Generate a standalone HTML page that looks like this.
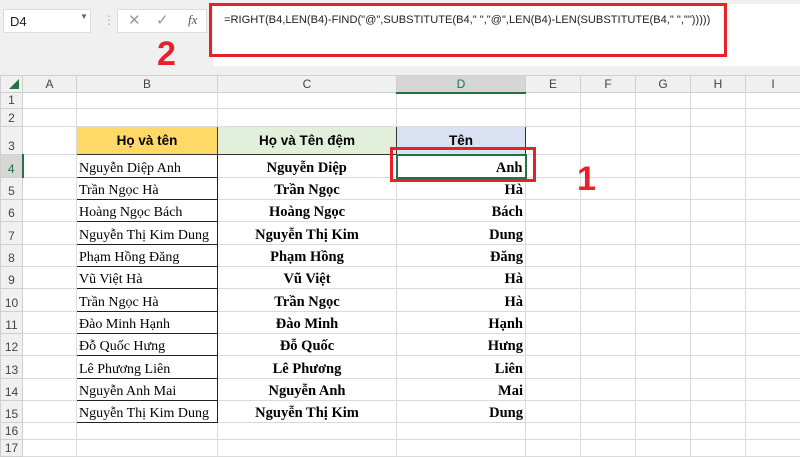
<!DOCTYPE html>
<html><head><meta charset="utf-8"><style>
*{margin:0;padding:0;box-sizing:border-box}
body{width:800px;height:450px;overflow:hidden;background:#fff;position:relative;font-family:"Liberation Sans",sans-serif}
.top{position:absolute;left:0;top:0;width:800px;height:75px;background:#f0f0f0}
.box{position:absolute;background:#fff;border:1px solid #dcdcdc}
.red{position:absolute;border:3px solid #e8202a}
.num{position:absolute;color:#e8202a;font-weight:bold;font-size:34px;line-height:1}
table{position:absolute;left:0;top:75px;border-collapse:collapse;table-layout:fixed;width:800px}
td{border:1px solid #dadada;font-size:13px;overflow:hidden;white-space:nowrap;padding:0 2px;vertical-align:bottom}
tr.h td{background:#f0f0f0;color:#444;text-align:center;vertical-align:middle;font-size:12px;height:17px;border-color:#cfcfcf}
td.rh{background:#f0f0f0;color:#444;text-align:center;font-size:12px;border-color:#cfcfcf;padding-bottom:1px}
.b{font-family:"Liberation Serif",serif;font-size:14px;border:1px solid #222}
.c{font-family:"Liberation Serif",serif;font-size:14.5px;font-weight:bold;text-align:center}
.d{font-family:"Liberation Serif",serif;font-size:14.5px;font-weight:bold;text-align:right}
.hd{font-weight:bold;font-size:13.5px;text-align:center;border:1px solid #333;vertical-align:middle}
</style></head><body>
<div class="top"></div>
<div class="box" style="left:3px;top:9px;width:88px;height:24px;font-size:13px;padding:4px 6px;color:#222">D4<span style="position:absolute;left:76px;top:2px;font-size:8px;color:#666">▼</span></div>
<div style="position:absolute;left:103px;top:13px;color:#aaa;font-size:12px">⋮</div>
<div class="box" style="left:117px;top:9px;width:90px;height:24px;font-size:15px;color:#999"><span style="position:absolute;left:10px;top:1px">✕</span><span style="position:absolute;left:38px;top:1px">✓</span><span style="position:absolute;left:70px;top:2px;font-family:'Liberation Serif',serif;font-style:italic;font-size:13px;color:#555">fx</span></div>
<div class="box" style="left:213px;top:4px;width:587px;height:62px;border:none"></div>
<div style="position:absolute;left:224px;top:14px;font-size:11.1px;color:#222;white-space:nowrap">=RIGHT(B4,LEN(B4)-FIND("@",SUBSTITUTE(B4," ","@",LEN(B4)-LEN(SUBSTITUTE(B4," ","")))))</div>
<div class="red" style="left:209px;top:3px;width:518px;height:54px"></div>
<div class="num" style="left:157px;top:37px">2</div>
<table>
<colgroup><col style="width:22px"><col style="width:54px"><col style="width:141px"><col style="width:179px"><col style="width:129px"><col style="width:55px"><col style="width:55px"><col style="width:55px"><col style="width:55px"><col style="width:55px"></colgroup>
<tr class="h"><td style="position:relative"><span style="position:absolute;right:3px;bottom:3px;width:0;height:0;border-left:10px solid transparent;border-bottom:10px solid #217346"></span></td><td>A</td><td>B</td><td>C</td><td style="background:#d6d6d6;border-bottom:2px solid #217346;color:#217346">D</td><td>E</td><td>F</td><td>G</td><td>H</td><td>I</td></tr>
<tr style="height:16px"><td class="rh">1</td><td></td><td></td><td></td><td></td><td></td><td></td><td></td><td></td><td></td></tr>
<tr style="height:18px"><td class="rh">2</td><td></td><td></td><td></td><td></td><td></td><td></td><td></td><td></td><td></td></tr>
<tr style="height:28px"><td class="rh">3</td><td></td><td class="hd" style="background:#ffd966">Họ và tên</td><td class="hd" style="background:#e2efda">Họ và Tên đệm</td><td class="hd" style="background:#d9e1f2">Tên</td><td></td><td></td><td></td><td></td><td></td></tr>
<tr style="height:23px"><td class="rh" style="background:#d6d6d6;border-right:2px solid #217346;color:#217346">4</td><td></td><td class="b">Nguyễn Diệp Anh</td><td class="c">Nguyễn Diệp</td><td class="d" style="border:2px solid #217346">Anh</td><td></td><td></td><td></td><td></td><td></td></tr>
<tr style="height:22px"><td class="rh">5</td><td></td><td class="b">Trần Ngọc Hà</td><td class="c">Trần Ngọc</td><td class="d">Hà</td><td></td><td></td><td></td><td></td><td></td></tr>
<tr style="height:22px"><td class="rh">6</td><td></td><td class="b">Hoàng Ngọc Bách</td><td class="c">Hoàng Ngọc</td><td class="d">Bách</td><td></td><td></td><td></td><td></td><td></td></tr>
<tr style="height:23px"><td class="rh">7</td><td></td><td class="b">Nguyễn Thị Kim Dung</td><td class="c">Nguyễn Thị Kim</td><td class="d">Dung</td><td></td><td></td><td></td><td></td><td></td></tr>
<tr style="height:22px"><td class="rh">8</td><td></td><td class="b">Phạm Hồng Đăng</td><td class="c">Phạm Hồng</td><td class="d">Đăng</td><td></td><td></td><td></td><td></td><td></td></tr>
<tr style="height:22px"><td class="rh">9</td><td></td><td class="b">Vũ Việt Hà</td><td class="c">Vũ Việt</td><td class="d">Hà</td><td></td><td></td><td></td><td></td><td></td></tr>
<tr style="height:23px"><td class="rh">10</td><td></td><td class="b">Trần Ngọc Hà</td><td class="c">Trần Ngọc</td><td class="d">Hà</td><td></td><td></td><td></td><td></td><td></td></tr>
<tr style="height:22px"><td class="rh">11</td><td></td><td class="b">Đào Minh Hạnh</td><td class="c">Đào Minh</td><td class="d">Hạnh</td><td></td><td></td><td></td><td></td><td></td></tr>
<tr style="height:22px"><td class="rh">12</td><td></td><td class="b">Đỗ Quốc Hưng</td><td class="c">Đỗ Quốc</td><td class="d">Hưng</td><td></td><td></td><td></td><td></td><td></td></tr>
<tr style="height:23px"><td class="rh">13</td><td></td><td class="b">Lê Phương Liên</td><td class="c">Lê Phương</td><td class="d">Liên</td><td></td><td></td><td></td><td></td><td></td></tr>
<tr style="height:22px"><td class="rh">14</td><td></td><td class="b">Nguyễn Anh Mai</td><td class="c">Nguyễn Anh</td><td class="d">Mai</td><td></td><td></td><td></td><td></td><td></td></tr>
<tr style="height:22px"><td class="rh">15</td><td></td><td class="b">Nguyễn Thị Kim Dung</td><td class="c">Nguyễn Thị Kim</td><td class="d">Dung</td><td></td><td></td><td></td><td></td><td></td></tr>
<tr style="height:17px"><td class="rh">16</td><td></td><td></td><td></td><td></td><td></td><td></td><td></td><td></td><td></td></tr>
<tr style="height:17px"><td class="rh">17</td><td></td><td></td><td></td><td></td><td></td><td></td><td></td><td></td><td></td></tr>
</table>
<div class="red" style="left:390px;top:147px;width:146px;height:35px"></div>
<div class="num" style="left:577px;top:162px">1</div>
</body></html>
